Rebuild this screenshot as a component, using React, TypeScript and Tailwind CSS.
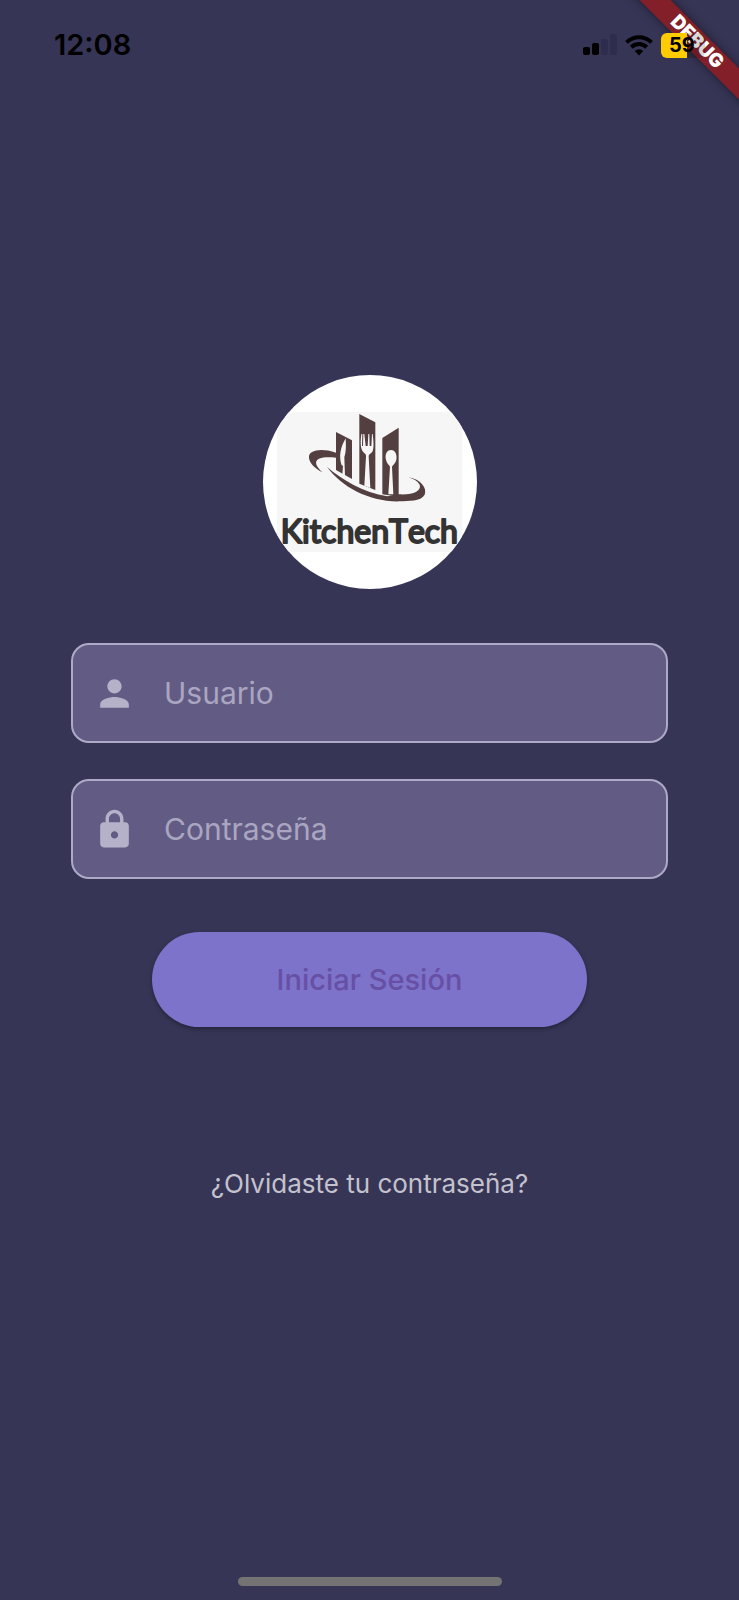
import { useState } from "react";

function SignalIcon() {
  return (
    <svg width="34" height="22" viewBox="0 0 34 22" aria-hidden="true">
      <rect x="0" y="13" width="7" height="8" rx="2" fill="#000" />
      <rect x="9" y="9" width="7" height="12" rx="2" fill="#000" />
      <rect x="18" y="5" width="7" height="16" rx="2" fill="#2f2d4e" />
      <rect x="27" y="0" width="7" height="21" rx="2" fill="#2f2d4e" />
    </svg>
  );
}

function WifiIcon() {
  return (
    <svg width="28" height="22" viewBox="0 0 28 22" aria-hidden="true">
      <g fill="none" stroke="#000" strokeWidth="4">
        <path d="M1.5 8.3A17.8 17.8 0 0 1 26.500 8.300" />
        <path d="M6.300 13.200A11 11 0 0 1 21.700 13.200" />
      </g>
      <path d="M14 21.500 9.700 17.100A6.100 6.100 0 0 1 18.300 17.100Z" fill="#000" />
    </svg>
  );
}

function PersonIcon() {
  return (
    <svg width="43" height="43" viewBox="0 0 24 24" fill="currentColor" aria-hidden="true">
      <path d="M12 12c2.210 0 4-1.790 4-4s-1.790-4-4-4-4 1.790-4 4 1.790 4 4 4zm0 2c-2.670 0-8 1.340-8 4v2h16v-2c0-2.660-5.330-4-8-4z" />
    </svg>
  );
}

function LockIcon() {
  return (
    <svg width="43" height="43" viewBox="0 0 24 24" fill="currentColor" aria-hidden="true">
      <path d="M18 8h-1V6c0-2.760-2.240-5-5-5S7 3.240 7 6v2H6c-1.100 0-2 .9-2 2v10c0 1.100.9 2 2 2h12c1.100 0 2-.9 2-2V10c0-1.100-.9-2-2-2zm-6 9c-1.100 0-2-.9-2-2s.9-2 2-2 2 .9 2 2-.9 2-2 2zm3.100-9H8.900V6c0-1.710 1.390-3.100 3.100-3.100 1.710 0 3.100 1.390 3.100 3.100v2z" />
    </svg>
  );
}

function Logo() {
  return (
    <div className="flex size-[214px] items-center justify-center overflow-hidden rounded-full bg-white">
      <svg width="185" height="140" viewBox="-69 20 555 420" role="img" aria-label="KitchenTech">
        <rect x="-69" y="20" width="555" height="420" fill="#f6f6f6" />
        <g fill="#533f40">
          <path d="M108 80 156 105V221L108 194Z" />
          <path d="M178 26 226 51V254L178 235Z" />
          <path d="M247 98 296 67V274L247 267Z" />
          <path d="M108 142C62 127 25 135 27 157 28 173 45 190 68 201 38 175 36 150 108 157Z" />
          <path d="M81 185C125 222 190 262 262 273L296 267C338 270 366 256 359 238 352 226 340 220 325 216 362 222 382 248 374 268 362 290 325 285 300 288 210 291 125 245 81 185Z" />
        </g>
        <g fill="#f6f6f6">
          <path d="M137 99C121 126 116 153 125 180L129 181 127 208 135 212 133 155C139 140 138 116 137 99Z" />
          <path d="M184 86C181 107 181 129 188 138 193 145 199 146 198 153L193 241 211 248 206 153C206 146 214 145 218 137 222 129 221 107 218 86H216L214 122H209L208 86H205L203 122H197L193 86H190L189 122H186L187 86Z" />
          <path d="M273 134C260 134 254 149 258 163 260 174 268 179 270 184L265 267H280L276 184C278 179 287 174 289 163 292 149 286 134 273 134Z" />
        </g>
        <text
          x="208"
          y="412"
          textAnchor="middle"
          fontSize="96"
          fontWeight="400"
          fill="#333333"
          stroke="#333333"
          strokeWidth="6"
          strokeLinejoin="round"
          className="font-['Lato',sans-serif] [font-kerning:none]"
        >
          KitchenTech
        </text>
      </svg>
    </div>
  );
}

const fieldClass =
  "flex h-[100px] items-center gap-7 rounded-[18px] border-2 border-[#ada9c6] bg-[#625c84] px-5 text-[#b5b1c8]";
const inputClass =
  "min-w-0 flex-1 bg-transparent text-[30px] text-white outline-none placeholder:text-[#aaa6c1]";

export default function App() {
  const [user, setUser] = useState("");
  const [password, setPassword] = useState("");

  return (
    <div className="relative flex min-h-screen flex-col bg-[#373556] font-['Inter','Liberation_Sans',sans-serif]">
      <div className="pointer-events-none absolute right-0 top-0 size-[130px] overflow-hidden">
        <div className="absolute -right-[58px] top-[31px] flex h-[22px] w-[200px] rotate-45 items-center justify-center bg-[#821f29] text-[19px] font-black text-white shadow-[0_0_10px_rgba(0,0,0,0.5)]">
          DEBUG
        </div>
      </div>

      <header className="relative flex h-[90px] items-center justify-between pl-[54px] pr-[34px] text-black">
        <time className="text-[29px] font-semibold">12:08</time>
        <div className="flex items-center gap-2">
          <SignalIcon />
          <WifiIcon />
          <div className="flex h-[25px] w-[44px] items-center rounded-md bg-linear-to-r from-[#ffcc00] from-58% to-black/15 to-58% pl-2 text-[20px] font-bold">
            59
          </div>
        </div>
      </header>

      <main className="flex flex-1 flex-col items-center justify-center px-[71px]">
        <Logo />
        <form className="mt-[54px] flex w-full flex-col items-center" onSubmit={(e) => e.preventDefault()}>
          <div className="flex w-full flex-col gap-9">
            <label className={fieldClass}>
              <PersonIcon />
              <input
                className={inputClass}
                type="text"
                aria-label="Usuario"
                placeholder="Usuario"
                value={user}
                onChange={(e) => setUser(e.target.value)}
              />
            </label>
            <label className={fieldClass}>
              <LockIcon />
              <input
                className={inputClass}
                type="password"
                aria-label="Contraseña"
                placeholder="Contraseña"
                value={password}
                onChange={(e) => setPassword(e.target.value)}
              />
            </label>
          </div>
          <button
            type="submit"
            className="mt-[53px] h-[95px] rounded-full bg-[#7d73cb] px-[125px] text-[29px] font-medium text-[#6750a4] shadow-[0_2px_4px_rgba(0,0,0,0.35)]"
          >
            Iniciar Sesión
          </button>
        </form>
        <a href="#recuperar" className="mt-[114px] flex h-[84px] items-center text-[26px] text-[#c3c2cd]">
          ¿Olvidaste tu contraseña?
        </a>
      </main>

      <footer className="flex h-[90px] items-end justify-center pb-[14px]">
        <div className="h-[9px] w-[264px] rounded-full bg-[#737373]" />
      </footer>
    </div>
  );
}
